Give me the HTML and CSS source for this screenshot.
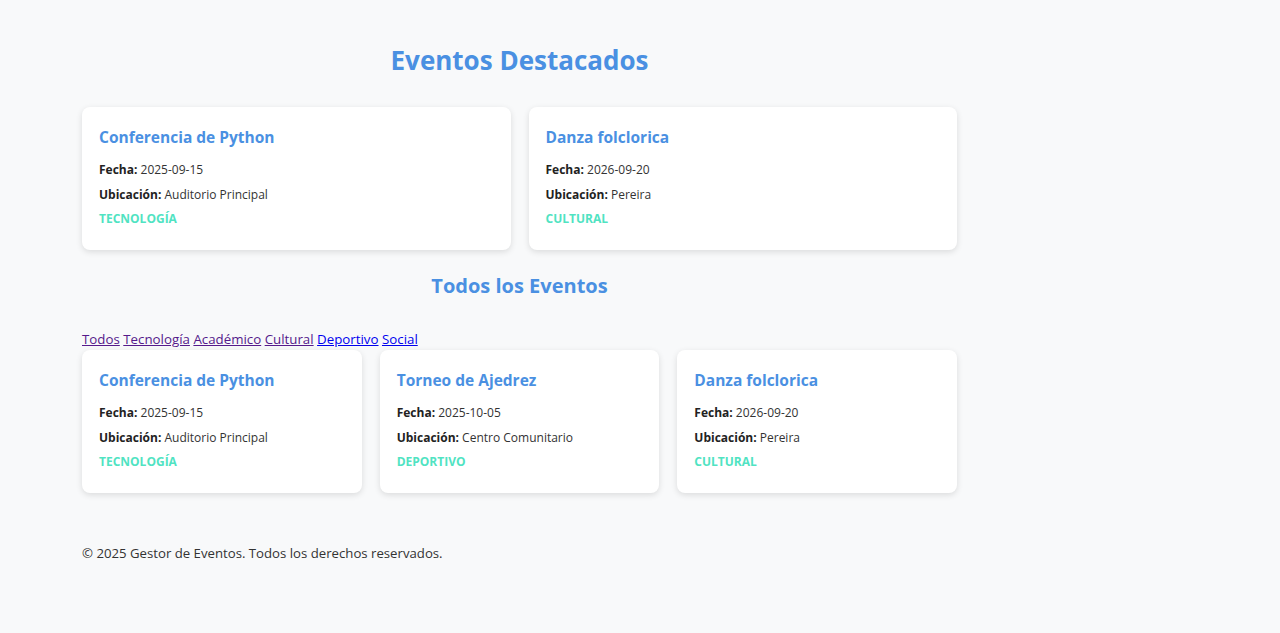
FILE: index.html
```html
<!DOCTYPE html>
<html lang="es">
<head>
<meta charset="utf-8">
<title>Gestor de Eventos</title>
<link rel="stylesheet" href="styles.css">
</head>
<body>
<main class="page">
  <section class="featured">
    <h1 class="page-title">Eventos Destacados</h1>
    <div class="grid grid-2">
      <article class="card">
        <h3 class="card-title">Conferencia de Python</h3>
        <p class="card-line"><strong>Fecha:</strong> 2025-09-15</p>
        <p class="card-line"><strong>Ubicación:</strong> Auditorio Principal</p>
        <p class="card-cat">TECNOLOGÍA</p>
      </article>
      <article class="card">
        <h3 class="card-title">Danza folclorica</h3>
        <p class="card-line"><strong>Fecha:</strong> 2026-09-20</p>
        <p class="card-line"><strong>Ubicación:</strong> Pereira</p>
        <p class="card-cat">CULTURAL</p>
      </article>
    </div>
  </section>
  <section class="all">
    <h2 class="section-title">Todos los Eventos</h2>
    <nav class="filters">
      <a href="#" class="visited">Todos</a>
      <a href="#" class="visited">Tecnología</a>
      <a href="#" class="visited">Académico</a>
      <a href="#" class="visited">Cultural</a>
      <a href="#" class="link">Deportivo</a>
      <a href="#" class="link">Social</a>
    </nav>
    <div class="grid grid-3">
      <article class="card">
        <h3 class="card-title">Conferencia de Python</h3>
        <p class="card-line"><strong>Fecha:</strong> 2025-09-15</p>
        <p class="card-line"><strong>Ubicación:</strong> Auditorio Principal</p>
        <p class="card-cat">TECNOLOGÍA</p>
      </article>
      <article class="card">
        <h3 class="card-title">Torneo de Ajedrez</h3>
        <p class="card-line"><strong>Fecha:</strong> 2025-10-05</p>
        <p class="card-line"><strong>Ubicación:</strong> Centro Comunitario</p>
        <p class="card-cat">DEPORTIVO</p>
      </article>
      <article class="card">
        <h3 class="card-title">Danza folclorica</h3>
        <p class="card-line"><strong>Fecha:</strong> 2026-09-20</p>
        <p class="card-line"><strong>Ubicación:</strong> Pereira</p>
        <p class="card-cat">CULTURAL</p>
      </article>
    </div>
  </section>
  <footer class="footer">© 2025 Gestor de Eventos. Todos los derechos reservados.</footer>
</main>
</body>
</html>
```

FILE: styles.css
```css
html, body {
  margin: 0;
  padding: 0;
  background: #f8f9fa;
}
body {
  font-family: "Open Sans", "Noto Sans", sans-serif;
  color: #333;
}
.page {
  width: 875px;
  margin-left: 82px;
  padding-top: 42px;
}
.page-title {
  margin: 0 0 29px;
  font-size: 26px;
  line-height: 36px;
  font-weight: 700;
  color: #4a90e2;
  text-align: center;
}
.section-title {
  margin: 22px 0 29px;
  font-size: 20px;
  line-height: 28px;
  font-weight: 700;
  color: #4a90e2;
  text-align: center;
}
.grid {
  display: grid;
  gap: 18px;
}
.grid-2 { grid-template-columns: repeat(2, 1fr); }
.grid-3 { grid-template-columns: repeat(3, 1fr); }
.card {
  background: #fff;
  border-radius: 8px;
  box-shadow: 0 2px 6px rgba(0, 0, 0, 0.12);
  padding: 17px;
  height: 143px;
  box-sizing: border-box;
}
.card-title {
  margin: 0 0 11px;
  font-size: 15.5px;
  line-height: 26px;
  font-weight: 700;
  color: #4a90e2;
}
.card-line {
  margin: 0 0 7px;
  font-size: 12px;
  line-height: 18px;
  color: #333;
}
.card-line strong {
  color: #222;
}
.card-cat {
  margin: -1px 0 0;
  font-size: 12px;
  line-height: 18px;
  font-weight: 700;
  color: #50e3c2;
}
.filters {
  font-size: 13.3px;
  line-height: 20px;
  height: 21px;
}
.filters a { text-decoration: underline; }
.filters .visited { color: #551a8b; }
.filters .link { color: #0000ee; }
.footer {
  margin-top: 50px;
  font-size: 13.2px;
  line-height: 20px;
  color: #333;
}
```
